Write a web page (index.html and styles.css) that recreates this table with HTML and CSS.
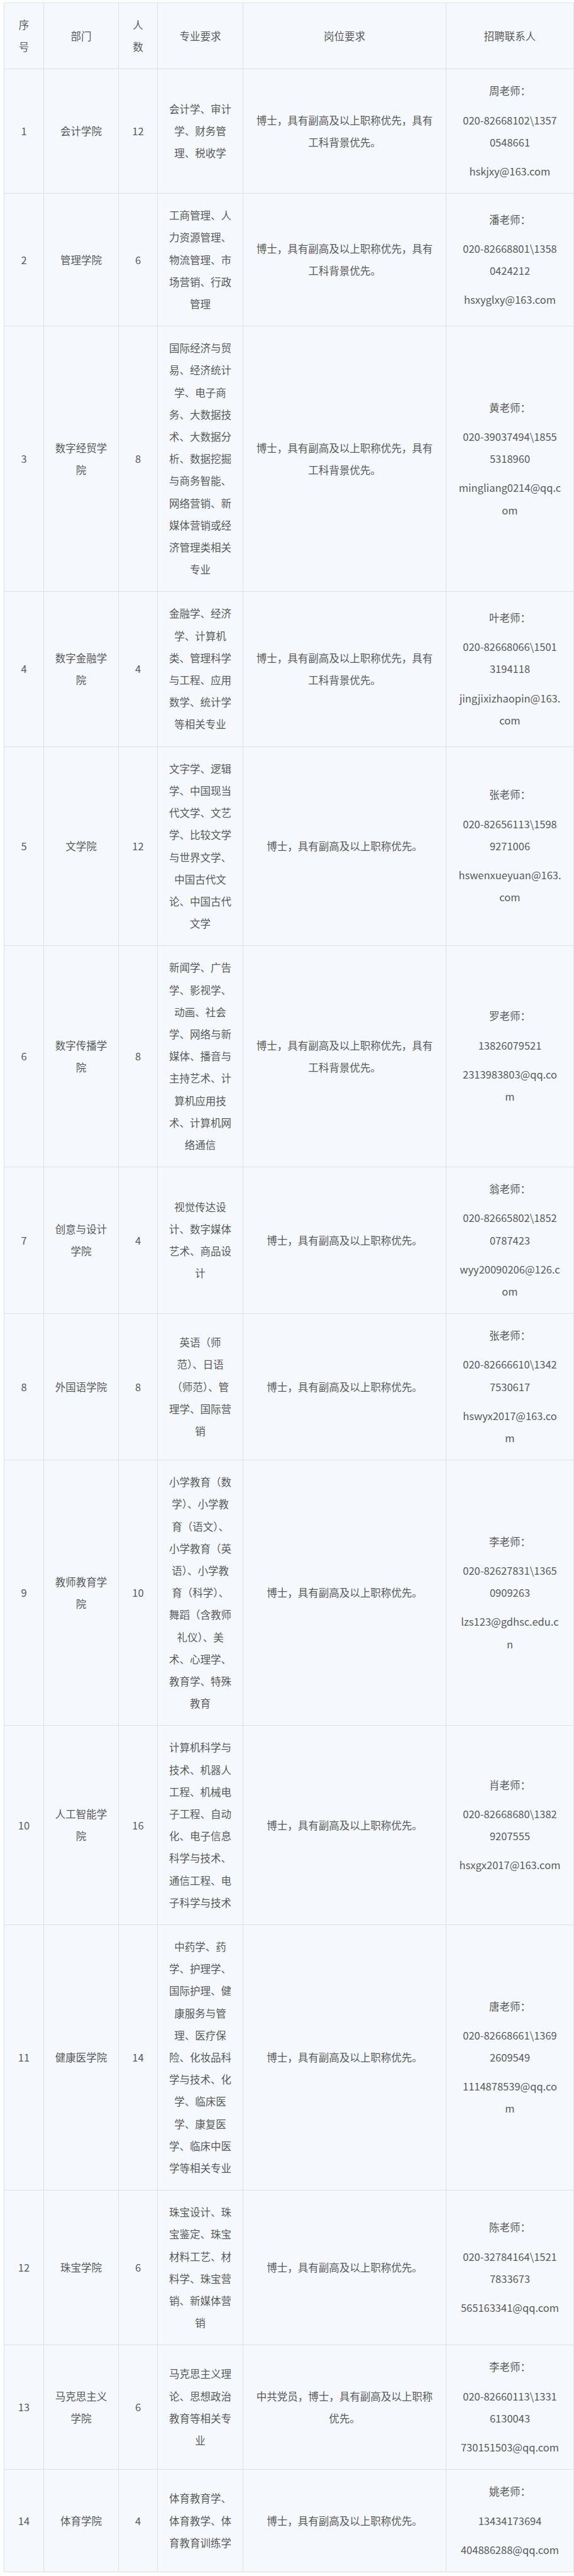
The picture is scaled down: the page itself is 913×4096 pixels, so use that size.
FILE: index.html
```html
<!DOCTYPE html>
<html lang="zh-CN">
<head>
<meta charset="utf-8">
<title>招聘岗位</title>
<link rel="stylesheet" href="styles.css">
</head>
<body>
<table class="jobs">
  <colgroup>
    <col class="c-no"><col class="c-dept"><col class="c-num"><col class="c-major"><col class="c-req"><col class="c-contact">
  </colgroup>
  <thead>
    <tr><th>序<br>号</th><th>部门</th><th>人<br>数</th><th>专业要求</th><th>岗位要求</th><th>招聘联系人</th></tr>
  </thead>
  <tbody>
    <tr><td>1</td><td>会计学院</td><td>12</td>
      <td class="major">会计学、审计<br>学、财务管<br>理、税收学</td>
      <td>博士，具有副高及以上职称优先，具有<br>工科背景优先。</td>
      <td class="contact"><p>周老师：</p><p>020-82668102\1357<br>0548661</p><p>hskjxy@163.com</p></td></tr>
    <tr><td>2</td><td>管理学院</td><td>6</td>
      <td class="major">工商管理、人<br>力资源管理、<br>物流管理、市<br>场营销、行政<br>管理</td>
      <td>博士，具有副高及以上职称优先，具有<br>工科背景优先。</td>
      <td class="contact"><p>潘老师：</p><p>020-82668801\1358<br>0424212</p><p>hsxyglxy@163.com</p></td></tr>
    <tr><td>3</td><td>数字经贸学<br>院</td><td>8</td>
      <td class="major">国际经济与贸<br>易、经济统计<br>学、电子商<br>务、大数据技<br>术、大数据分<br>析、数据挖掘<br>与商务智能、<br>网络营销、新<br>媒体营销或经<br>济管理类相关<br>专业</td>
      <td>博士，具有副高及以上职称优先，具有<br>工科背景优先。</td>
      <td class="contact"><p>黄老师：</p><p>020-39037494\1855<br>5318960</p><p>mingliang0214@qq.c<br>om</p></td></tr>
    <tr><td>4</td><td>数字金融学<br>院</td><td>4</td>
      <td class="major">金融学、经济<br>学、计算机<br>类、管理科学<br>与工程、应用<br>数学、统计学<br>等相关专业</td>
      <td>博士，具有副高及以上职称优先，具有<br>工科背景优先。</td>
      <td class="contact"><p>叶老师：</p><p>020-82668066\1501<br>3194118</p><p>jingjixizhaopin@163.<br>com</p></td></tr>
    <tr><td>5</td><td>文学院</td><td>12</td>
      <td class="major">文字学、逻辑<br>学、中国现当<br>代文学、文艺<br>学、比较文学<br>与世界文学、<br>中国古代文<br>论、中国古代<br>文学</td>
      <td>博士，具有副高及以上职称优先。</td>
      <td class="contact"><p>张老师：</p><p>020-82656113\1598<br>9271006</p><p>hswenxueyuan@163.<br>com</p></td></tr>
    <tr><td>6</td><td>数字传播学<br>院</td><td>8</td>
      <td class="major">新闻学、广告<br>学、影视学、<br>动画、社会<br>学、网络与新<br>媒体、播音与<br>主持艺术、计<br>算机应用技<br>术、计算机网<br>络通信</td>
      <td>博士，具有副高及以上职称优先，具有<br>工科背景优先。</td>
      <td class="contact"><p>罗老师：</p><p>13826079521</p><p>2313983803@qq.co<br>m</p></td></tr>
    <tr><td>7</td><td>创意与设计<br>学院</td><td>4</td>
      <td class="major">视觉传达设<br>计、数字媒体<br>艺术、商品设<br>计</td>
      <td>博士，具有副高及以上职称优先。</td>
      <td class="contact"><p>翁老师：</p><p>020-82665802\1852<br>0787423</p><p>wyy20090206@126.c<br>om</p></td></tr>
    <tr><td>8</td><td>外国语学院</td><td>8</td>
      <td class="major">英语（师<br>范）、日语<br>（师范）、管<br>理学、国际营<br>销</td>
      <td>博士，具有副高及以上职称优先。</td>
      <td class="contact"><p>张老师：</p><p>020-82666610\1342<br>7530617</p><p>hswyx2017@163.co<br>m</p></td></tr>
    <tr><td>9</td><td>教师教育学<br>院</td><td>10</td>
      <td class="major">小学教育（数<br>学）、小学教<br>育（语文）、<br>小学教育（英<br>语）、小学教<br>育（科学）、<br>舞蹈（含教师<br>礼仪）、美<br>术、心理学、<br>教育学、特殊<br>教育</td>
      <td>博士，具有副高及以上职称优先。</td>
      <td class="contact"><p>李老师：</p><p>020-82627831\1365<br>0909263</p><p>lzs123@gdhsc.edu.c<br>n</p></td></tr>
    <tr><td>10</td><td>人工智能学<br>院</td><td>16</td>
      <td class="major">计算机科学与<br>技术、机器人<br>工程、机械电<br>子工程、自动<br>化、电子信息<br>科学与技术、<br>通信工程、电<br>子科学与技术</td>
      <td>博士，具有副高及以上职称优先。</td>
      <td class="contact"><p>肖老师：</p><p>020-82668680\1382<br>9207555</p><p>hsxgx2017@163.com</p></td></tr>
    <tr><td>11</td><td>健康医学院</td><td>14</td>
      <td class="major">中药学、药<br>学、护理学、<br>国际护理、健<br>康服务与管<br>理、医疗保<br>险、化妆品科<br>学与技术、化<br>学、临床医<br>学、康复医<br>学、临床中医<br>学等相关专业</td>
      <td>博士，具有副高及以上职称优先。</td>
      <td class="contact"><p>唐老师：</p><p>020-82668661\1369<br>2609549</p><p>1114878539@qq.co<br>m</p></td></tr>
    <tr><td>12</td><td>珠宝学院</td><td>6</td>
      <td class="major">珠宝设计、珠<br>宝鉴定、珠宝<br>材料工艺、材<br>料学、珠宝营<br>销、新媒体营<br>销</td>
      <td>博士，具有副高及以上职称优先。</td>
      <td class="contact"><p>陈老师：</p><p>020-32784164\1521<br>7833673</p><p>565163341@qq.com</p></td></tr>
    <tr><td>13</td><td>马克思主义<br>学院</td><td>6</td>
      <td class="major">马克思主义理<br>论、思想政治<br>教育等相关专<br>业</td>
      <td>中共党员，博士，具有副高及以上职称<br>优先。</td>
      <td class="contact"><p>李老师：</p><p>020-82660113\1331<br>6130043</p><p>730151503@qq.com</p></td></tr>
    <tr><td>14</td><td>体育学院</td><td>4</td>
      <td class="major">体育教育学、<br>体育教学、体<br>育教育训练学</td>
      <td>博士，具有副高及以上职称优先。</td>
      <td class="contact"><p>姚老师：</p><p>13434173694</p><p>404886288@qq.com</p></td></tr>
  </tbody>
</table>
</body>
</html>
```
FILE: styles.css
```css
html, body {
  margin: 0;
  padding: 0;
  background: #ffffff;
}
body {
  font-family: "Noto Sans CJK SC", "Noto Sans", sans-serif;
  color: #595959;
  font-size: 16.5px;
  line-height: 35.2px;
}
.jobs {
  margin: 4px 0 0 6px;
  width: 906px;
  table-layout: fixed;
  border-collapse: collapse;
  background: #f5f9fd;
}
.c-no { width: 63px; }
.c-dept { width: 119px; }
.c-num { width: 62px; }
.c-major { width: 136px; }
.c-req { width: 323px; }
.c-contact { width: 203px; }
.jobs th,
.jobs td {
  border: 1px solid #dde2e8;
  padding: 17px 14px;
  text-align: center;
  vertical-align: middle;
  font-weight: normal;
  white-space: nowrap;
  overflow: visible;
}
.jobs td:nth-child(1),
.jobs th:nth-child(1),
.jobs td:nth-child(3),
.jobs th:nth-child(3) {
  padding-left: 4px;
  padding-right: 4px;
}
.jobs .contact {
  padding-left: 6px;
  padding-right: 6px;
}
.contact p {
  margin: 0;
}
.contact p + p {
  margin-top: 11px;
}
```
